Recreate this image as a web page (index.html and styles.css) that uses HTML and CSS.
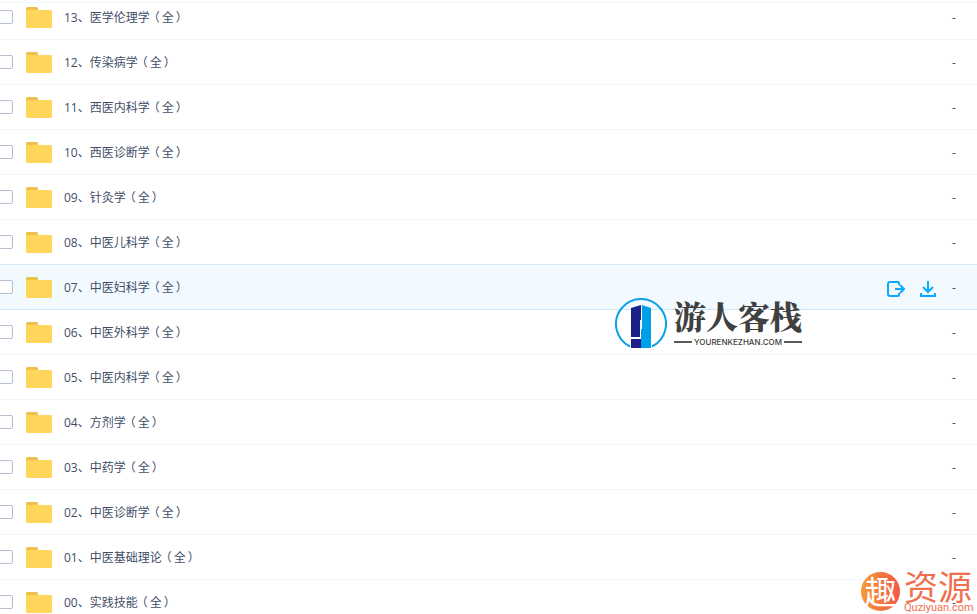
FILE: index.html
```
<!DOCTYPE html>
<html lang="zh-CN">
    <head>
        <meta charset="utf-8">
        <title>文件列表</title>
        <link rel="stylesheet" href="styles.css">
    </head>
    <body>
        <!--folder shape shared by every row-->
        <svg width="0" height="0" class="sprite">
            <symbol id="folder" viewBox="0 0 26 21">
                <path d="M0 6V1.500Q0 0 1.500 0H10.500Q12 0 12 1.500V6z" fill="#edc04b"/>
                <path d="M0 3H24.500Q26 3 26 4.500V19.500Q26 21 24.500 21H1.500Q0 21 0 19.500z" fill="#ffd659"/>
            </symbol>
        </svg>

        <div class="header"></div>
        <ul class="list" id="list"></ul>

        <!--watermark of the site-->
        <div class="inn">
            <svg class="inn-logo" width="52" height="52" viewBox="0 0 52 52">
                <path d="M15 48.500A25 25 0 1 1 37 48.500" fill="none" stroke="#0aa0e8" stroke-width="2"/>
                <path d="M16 10L26 7V30H25V39H16z" fill="#1d2088"/>
                <path d="M16 41H26V50H16z" fill="#1d2088"/>
                <path d="M27 7L36 10V50H26V31H27z" fill="#00a0e9"/>
                <path d="M25.500 22V30" fill="none" stroke="#dcecf8"/>
            </svg>
            <div class="inn-text">
                <div class="inn-name">游人客栈</div>
                <div class="inn-site">YOURENKEZHAN.COM</div>
            </div>
        </div>

        <div class="quzi">
            <div class="quzi-logo">趣</div>
            <div class="quzi-text">
                <div class="quzi-name">资源</div>
                <div class="quzi-site">Quziyuan.com</div>
            </div>
        </div>

        <script src="list.js"></script>
    </body>
</html>
```
FILE: styles.css
```
* {
box-sizing: border-box;
}

body {
margin: 0;
height: 100vh;
position: relative;
overflow: hidden;
background: white;
color: #424e67;
font-family: "Open Sans", "Noto Sans CJK SC", sans-serif;
font-size: 12px;
}

.sprite {
position: absolute;
}

.header {
height: 3px;
border-bottom: 1px solid #f2f6fd;
background: white;
}

.list {
list-style: none;
margin: 0;
padding: 0;
}

.row {
display: flex;
align-items: center;
height: 45px;
padding-right: 20px;
border-bottom: 1px solid #f2f6fd;
}

/* first row is partly scrolled under the header */
.row:first-child {
height: 37px;
padding-bottom: 8px;
}

.row.active {
background: #f2faff;
border-color: #cbe8fd;
box-shadow: 0 -1px 0 #d6ebfa;
}

.check {
appearance: none;
width: 14px;
height: 14px;
margin: 0 13px 0 -1px;
border: 1px solid #b4c0d0;
border-radius: 2px;
background: white;
}

.folder {
width: 26px;
height: 21px;
margin-right: 12px;
}

.name {
flex: 1;
padding-top: 2px;
line-height: 20px;
}

.name a {
color: inherit;
text-decoration: none;
}

/* brackets sit in the middle of their square */
.open {
margin: 0 2px 0 -2px;
}

.close {
margin-left: 2px;
}

.tools {
display: flex;
gap: 14px;
margin-right: 15px;
padding-top: 4px;
}

.tools button {
width: 18px;
height: 18px;
padding: 0;
border: 0;
background: none;
}

.tools svg {
display: block;
}

.size {
width: 5px;
}

.inn {
position: absolute;
top: 298px;
right: 175px;
display: flex;
gap: 7px;
}

.inn-text {
width: 128px;
color: #404040;
}

.inn-name {
font-family: "Noto Serif CJK SC", "Noto Sans CJK SC", serif;
font-size: 32px;
font-weight: 900;
line-height: 34px;
padding-bottom: 4px;
white-space: nowrap;
}

.inn-site {
display: flex;
align-items: center;
gap: 2px;
font-family: Inter, sans-serif;
font-size: 8px;
font-weight: 500;
line-height: 12px;
}

.inn-site::before, .inn-site::after {
content: "";
flex: 1;
height: 2px;
background: #595959;
}

.quzi {
position: absolute;
right: 5px;
bottom: 0;
display: flex;
gap: 4px;
color: #ef704f;
}

.quzi-logo {
width: 39px;
height: 39px;
margin-top: 2px;
border-radius: 50%;
background: linear-gradient(90deg, #f59a35, #f2574a);
color: white;
font-family: "Noto Sans CJK SC", sans-serif;
font-size: 32px;
line-height: 36px;
text-align: center;
}

.quzi-text {
width: 68px;
}

.quzi-name {
font-family: "Noto Sans CJK SC", sans-serif;
font-size: 34px;
line-height: 32px;
}

.quzi-site {
font-family: Roboto, sans-serif;
font-size: 11px;
line-height: 12px;
}
```
FILE: list.js
```
let folders = [
    "13、医学伦理学",
    "12、传染病学",
    "11、西医内科学",
    "10、西医诊断学",
    "09、针灸学",
    "08、中医儿科学",
    "07、中医妇科学",
    "06、中医外科学",
    "05、中医内科学",
    "04、方剂学",
    "03、中药学",
    "02、中医诊断学",
    "01、中医基础理论",
    "00、实践技能"
];
let activeRow = 6;

//share and download buttons, shown only on the active row
let tools = `<div class="tools">
    <button type="button" aria-label="分享"><svg width="18" height="18" viewBox="0 0 18 18" fill="none" stroke="#09aaff" stroke-width="2">
        <path d="M12 5V3Q12 2 11 2H3Q1 2 1 4V14Q1 16 3 16H11Q12 16 12 15V13M8 9H17M13 5L17 9L13 13"/></svg></button>
    <button type="button" aria-label="下载"><svg width="18" height="18" viewBox="0 0 18 18" fill="none" stroke="#09aaff" stroke-width="2">
        <path d="M9 1V11M4 7L9 12L14 7M2 13V16H16V13"/></svg></button>
</div>`;

document.getElementById("list").innerHTML = folders.map(function(name, i) {
    let active = i == activeRow;
    return `<li class="row${active ? " active" : ""}">
        <input class="check" type="checkbox" id="f${i}" aria-label="${name}">
        <svg class="folder"><use href="#folder"/></svg>
        <div class="name"><a href="#">${name}<span class="open">（</span>全<span class="close">）</span></a></div>
        ${active ? tools : ""}
        <div class="size">-</div>
    </li>`;
}).join("");
```
